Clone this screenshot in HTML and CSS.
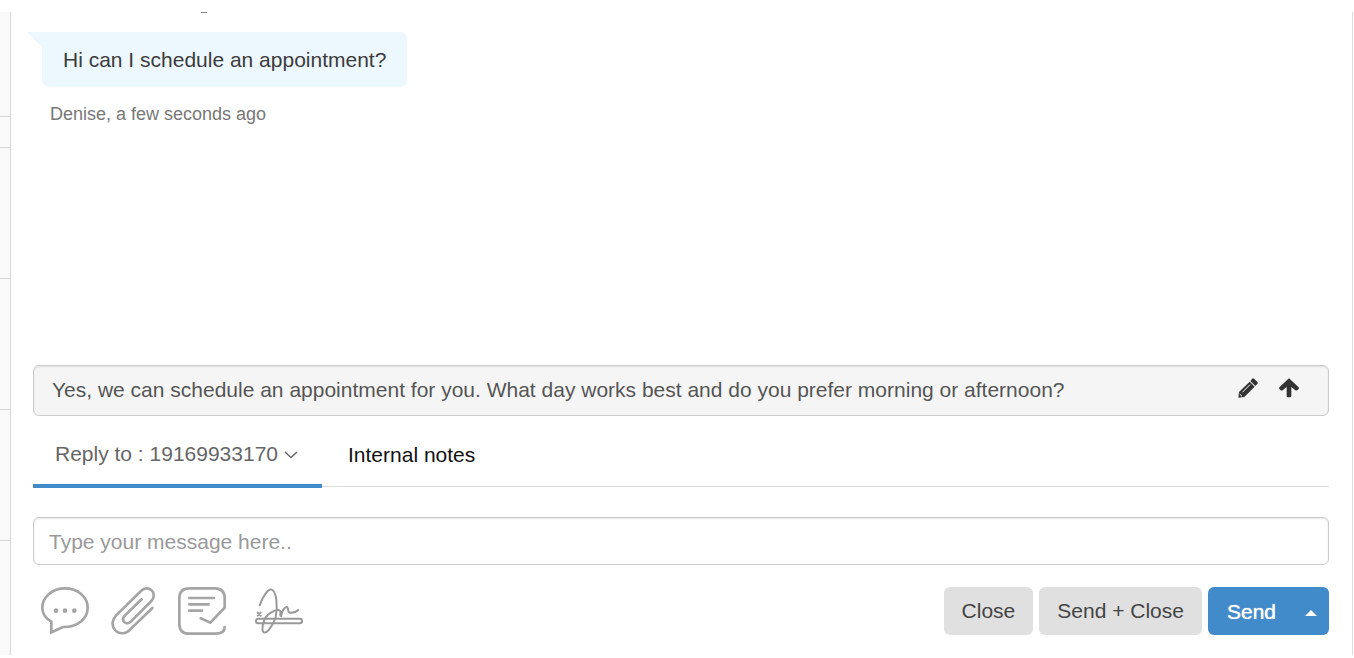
FILE: index.html
```html
<!DOCTYPE html>
<html lang="en">
<head>
<meta charset="utf-8">
<title>Conversation</title>
<link rel="stylesheet" href="styles.css">
</head>
<body>
<div class="app">
  <aside class="rail">
    <div class="rail-head"></div>
    <div class="rail-gap"></div>
    <div class="rail-item"></div>
    <div class="rail-item"></div>
    <div class="rail-item"></div>
  </aside>
  <main class="panel">
    <section class="thread">
      <span class="scrolled-edge"></span>
      <p class="bubble">Hi can I schedule an appointment?</p>
      <p class="meta">Denise, a few seconds ago</p>
    </section>
    <section class="composer">
      <div class="suggestion">
        <span class="suggestion-text">Yes, we can schedule an appointment for you. What day works best and do you prefer morning or afternoon?</span>
        <button class="icon-button" type="button" aria-label="Edit suggestion">
          <svg class="icon-small" viewBox="0 0 60 60"><path d="M42 3Q45-1 49 3L58 12Q61 15 57 19L52 24L37 9Z"/><path d="M35 11L50 26L19 57L1 59L3 42Z"/><path class="cut" d="M13 43L36 20M5 48L12 55"/></svg>
        </button>
        <button class="icon-button" type="button" aria-label="Use suggestion">
          <svg class="icon-small" viewBox="0 0 60 60"><path d="M30 1L59 28Q61 31 58 34L55 37Q52 39 48 36L37 27V54Q37 58 33 58H27Q23 58 23 54V27L12 36Q8 39 5 37L2 34Q-1 31 1 28Z"/></svg>
        </button>
      </div>
      <nav class="tabs">
        <button class="tab tab-active" type="button">Reply to : 19169933170 <svg class="chevron" viewBox="0 0 28 28"><path d="M2 10L14 21L26 10"/></svg></button>
        <button class="tab" type="button">Internal notes</button>
      </nav>
      <input class="message" type="text" placeholder="Type your message here.." aria-label="Message">
      <div class="actions">
        <button class="tool" type="button" aria-label="Templates">
          <svg class="icon-large" viewBox="0 0 144 144"><path d="M31 104C14 94 4 80 4 62C4 30 34 4 72 4C110 4 140 30 140 62C140 96 108 121 66 120L31 136Z"/><g class="solid"><circle cx="45" cy="71" r="7"/><circle cx="72" cy="71" r="7"/><circle cx="100" cy="71" r="7"/></g></svg>
        </button>
        <button class="tool" type="button" aria-label="Attach file">
          <svg class="icon-large" viewBox="-6 0 144 144"><path d="M124 63L58 127C46 141 26 143 13 130C0 116 3 98 15 86L90 12C100 2 114 2 122 10C131 19 130 33 121 42L60 103C53 110 45 111 40 105C34 99 35 92 42 85L92 37"/></svg>
        </button>
        <button class="tool tool-form" type="button" aria-label="Forms">
          <svg class="icon-large" viewBox="0 0 144 144"><path d="M68 94L97 107L140 62V34Q140 4 110 4H34Q4 4 4 34V110Q4 140 34 140H112Q140 140 140 120"/><path d="M34 33H108M34 52H92M34 71H72"/></svg>
        </button>
        <button class="tool tool-signature" type="button" aria-label="Signature">
          <svg class="icon-large thin" viewBox="0 0 144 144"><path d="M14 55C24 25 40 5 50 8C66 14 68 60 62 90C54 115 36 141 26 136C18 128 24 98 38 84C52 71 70 66 75 71C80 76 72 86 78 87C82 70 90 58 96 60C102 64 96 79 108 77Q122 77 130 69"/><rect x="3" y="95" width="138" height="14" rx="7"/><path d="M8 77L17 86M17 77L8 86"/></svg>
        </button>
        <div class="buttons">
          <button class="button" type="button">Close</button>
          <button class="button" type="button">Send + Close</button>
          <div class="split">
            <button class="send" type="button">Send</button>
            <button class="send-more" type="button" aria-label="More send options"><span class="caret"></span></button>
          </div>
        </div>
      </div>
    </section>
  </main>
</div>
</body>
</html>
```
FILE: styles.css
```css
* { box-sizing: border-box; }
body { margin: 0; background: #fff; font: 21px/24px "Liberation Sans", Arial, sans-serif; }
button, input { margin: 0; padding: 0; border: 0; background: none; font: inherit; color: inherit; }
button { cursor: pointer; }
svg { display: block; }
.app { display: flex; height: 100vh; padding: 12px 1px 3px 0; }

.rail { flex: none; width: 11px; overflow: hidden; background: #f9f9f9; border-right: 1px solid #d8d8d8; }
.rail-head, .rail-gap, .rail-item { border-bottom: 1px solid #d8d8d8; }
.rail-head { height: 105px; }
.rail-gap { height: 31px; }
.rail-item { height: 131px; }

.panel { flex: 1; min-width: 0; display: flex; flex-direction: column; padding: 0 23px 20px 22px; border-right: 1px solid #ddd; }
.thread { position: relative; flex: 1; min-height: 0; padding: 20px 9px; }
.scrolled-edge { position: absolute; top: 0; left: 168px; width: 6px; height: 1px; background: #888; }
.bubble { position: relative; width: fit-content; margin: 0; padding: 16px 21px 15px; border-radius: 0 7px 7px 7px; background: #ecf7fe; color: #3c3c3c; }
.bubble::before { content: ""; position: absolute; top: 0; left: -15px; border-top: 15px solid #ecf7fe; border-left: 15px solid transparent; }
.meta { margin: 15px 8px; font-size: 18px; color: #777; }

.suggestion { display: flex; align-items: center; padding: 12px 29px 13px 18px; border: 1px solid #ccc; border-radius: 6px; background: #f5f5f5; box-shadow: inset 0 1px 2px rgba(0, 0, 0, .1); color: #555; }
.suggestion-text { flex: 1; }
.icon-button { margin-left: 20px; padding-bottom: 4px; color: #333; }
.icon-small { width: 20px; height: 20px; fill: currentColor; }
.icon-button + .icon-button { margin-left: 21px; }
.icon-small .cut { fill: none; stroke: #f5f5f5; stroke-width: 3; }

.tabs { display: flex; height: 71px; margin-bottom: 30px; border-bottom: 1px solid #ddd; }
.tab { display: flex; align-items: center; gap: 6px; padding: 7px 26px 0; color: #111; }
.tab-active { height: 72px; padding: 8px 24px 0 22px; border-bottom: 4px solid #428bca; color: #666; }
.chevron { width: 14px; height: 14px; fill: none; stroke: currentColor; stroke-width: 3; }

.message { display: block; width: 100%; height: 48px; padding: 2px 15px 0; border: 1px solid #ccc; border-radius: 6px; box-shadow: inset 0 1px 2px rgba(0, 0, 0, .1); color: #555; }
.message::placeholder { color: #999; opacity: 1; }

.actions { display: flex; margin-top: 22px; padding-left: 8px; }
.tool { margin-right: 20px; }
.tool-form { margin-left: 1px; }
.tool-signature { margin-left: 9px; }
.icon-large { width: 48px; height: 48px; fill: none; stroke: #a5a5a5; stroke-width: 8; stroke-linecap: round; }
.icon-large .solid { fill: #a5a5a5; stroke: none; }
.icon-large.thin { stroke: #999; stroke-width: 6; }
.buttons { display: flex; gap: 6px; margin-left: auto; }
.button { height: 48px; padding: 0 18px; border-radius: 6px; background: #e0e0e0; color: #444; }
.split { display: flex; overflow: hidden; border-radius: 6px; background: #428bca; color: #fff; }
.send { padding: 1px 18px 0 19px; text-shadow: 0 0 1px #fff; }
.send-more { padding: 4px 12px 0 11px; }
.caret { display: block; border: 6px solid transparent; border-top: 0; border-bottom-color: #fff; }
```
